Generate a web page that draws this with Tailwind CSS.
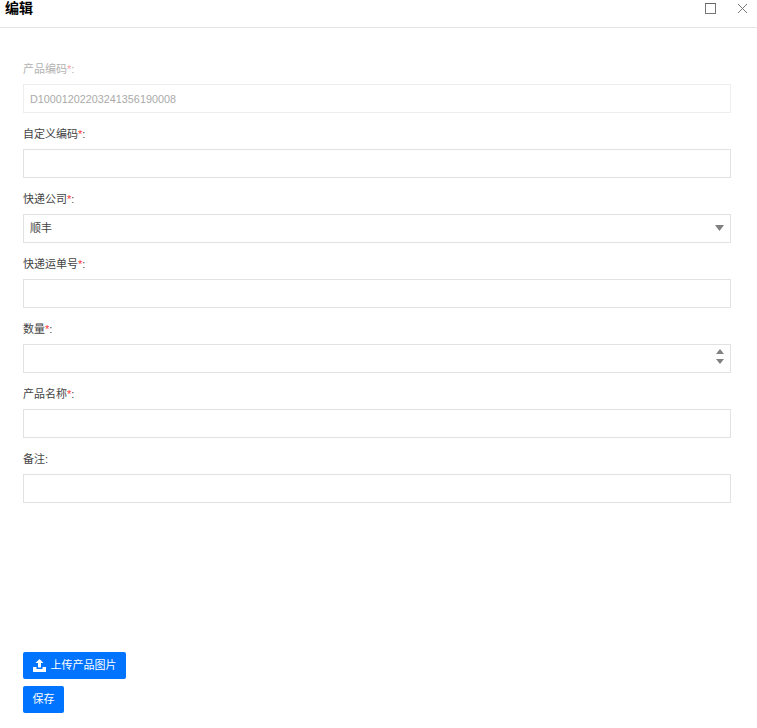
<!DOCTYPE html>
<html lang="zh-CN">

<head>
    <meta charset="UTF-8">
    <meta name="viewport" content="width=device-width, initial-scale=1.0">
    <title>编辑</title>
    <script src="https://cdn.jsdelivr.net/npm/@tailwindcss/browser@4"></script>
</head>

<body class="bg-white font-['Liberation_Sans','Noto_Sans_CJK_SC',sans-serif] text-[11px] text-[#444]">

    <div class="flex h-[28px] items-start justify-between border-b border-[#e5e5e5]">
        <h1 class="pl-[5px] text-sm leading-[16px] font-bold text-black">编辑</h1>
        <div class="flex items-center gap-[21px] pt-[3px] pr-[9px]">
            <svg width="11" height="11" viewBox="0 0 11 11" fill="none">
                <rect x="0.5" y="0.5" width="10" height="10" stroke="#777" />
                <path d="M0 .5H11" stroke="#666" />
            </svg>
            <svg width="11" height="11" viewBox="0 0 11 11" fill="none" stroke="#777">
                <path d="M1 1L10 10M10 1L1 10" />
            </svg>
        </div>
    </div>

    <form class="flex flex-col px-[23px] pt-[31px] pr-[26px]">
        <div>
            <label class="block h-5 mb-[5px] leading-5 text-[#b3b3b3]">产品编码<span class="text-[#f5a3a3]">*</span>:</label>
            <input type="text" value="D10001202203241356190008" disabled class="block h-[29px] w-full border border-[#eeeeee] px-[6px] text-[10.8px] text-[#aaa]">
        </div>
        <div class="mt-[11px]">
            <label class="block h-5 mb-[5px] leading-5">自定义编码<span class="text-[#f33]">*</span>:</label>
            <input type="text" class="block h-[29px] w-full border border-[#e2e2e2] px-[6px] text-[11px]">
        </div>
        <div class="mt-[11px]">
            <label class="block h-5 mb-[5px] leading-5">快递公司<span class="text-[#f33]">*</span>:</label>
            <div class="relative">
                <select class="block h-[29px] w-full appearance-none border border-[#e2e2e2] bg-white px-[6px] text-[11px] text-[#444]">
                    <option>顺丰</option>
                </select>
                <svg class="absolute right-[7px] top-[11px]" width="9" height="6" viewBox="0 0 9 6"><path d="M0 0H9L4.5 6Z" fill="#808080" /></svg>
            </div>
        </div>
        <div class="mt-[11px]">
            <label class="block h-5 mb-[5px] leading-5">快递运单号<span class="text-[#f33]">*</span>:</label>
            <input type="text" class="block h-[29px] w-full border border-[#e2e2e2] px-[6px] text-[11px]">
        </div>
        <div class="mt-[11px]">
            <label class="block h-5 mb-[5px] leading-5">数量<span class="text-[#f33]">*</span>:</label>
            <div class="relative">
                <input type="text" class="block h-[29px] w-full border border-[#e2e2e2] px-[6px] text-[11px]">
                <svg class="absolute right-[7px] top-[5px]" width="8" height="15" viewBox="0 0 8 15">
                    <path d="M0 5L4 0L8 5Z" fill="#808080" />
                    <path d="M0 10H8L4 15Z" fill="#808080" />
                </svg>
            </div>
        </div>
        <div class="mt-[11px]">
            <label class="block h-5 mb-[5px] leading-5">产品名称<span class="text-[#f33]">*</span>:</label>
            <input type="text" class="block h-[29px] w-full border border-[#e2e2e2] px-[6px] text-[11px]">
        </div>
        <div class="mt-[11px]">
            <label class="block h-5 mb-[5px] leading-5">备注:</label>
            <input type="text" class="block h-[29px] w-full border border-[#e2e2e2] px-[6px] text-[11px]">
        </div>

        <button type="button" class="mt-[149px] flex h-[27px] w-[103px] items-center justify-center gap-[5px] rounded-[2px] bg-[#0073ff] text-[11px] text-white">
            <svg width="13" height="13" viewBox="0 0 13 13" fill="white">
                <path d="M6.500 0L10.500 4H8V8.500H5V4H2.500Z" />
                <path d="M0 8H3.500V10H9.500V8H13V13H0Z" />
            </svg>
            上传产品图片
        </button>
        <button type="button" class="mt-[7px] h-[27px] w-[41px] rounded-[2px] bg-[#0073ff] text-[11px] text-white">保存</button>
    </form>

</body>

</html>
